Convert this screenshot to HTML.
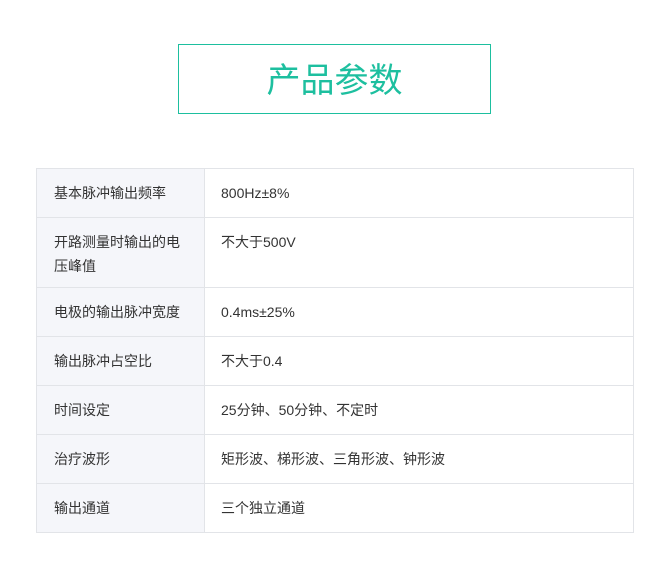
<!DOCTYPE html><html><head><meta charset="utf-8"><style>
body{margin:0;background:#fff;width:664px;height:574px;overflow:hidden;font-family:"Liberation Sans","Noto Sans CJK SC",sans-serif;}
.t{position:absolute;left:178px;top:44px;width:311px;height:68px;border:1px solid #1dbf9f;color:#1dbf9f;font-size:34px;text-align:center;line-height:72px;}
table{position:absolute;left:36px;top:168px;width:598px;border-collapse:collapse;font-size:14px;color:#333;}
td{border:1px solid #e2e4e8;vertical-align:top;padding:12px 0 0 16px;line-height:24px;}
td.a{background:#f5f6fa;width:130px;padding-left:17px;padding-right:20px;}
</style></head><body>
<div class="t">产品参数</div>
<table>
<tr style="height:49px"><td class="a">基本脉冲输出频率</td><td>800Hz±8%</td></tr>
<tr style="height:70px"><td class="a">开路测量时输出的电压峰值</td><td>不大于500V</td></tr>
<tr style="height:49px"><td class="a">电极的输出脉冲宽度</td><td>0.4ms±25%</td></tr>
<tr style="height:49px"><td class="a">输出脉冲占空比</td><td>不大于0.4</td></tr>
<tr style="height:49px"><td class="a">时间设定</td><td>25分钟、50分钟、不定时</td></tr>
<tr style="height:49px"><td class="a">治疗波形</td><td>矩形波、梯形波、三角形波、钟形波</td></tr>
<tr style="height:49px"><td class="a">输出通道</td><td>三个独立通道</td></tr>
</table>
</body></html>
